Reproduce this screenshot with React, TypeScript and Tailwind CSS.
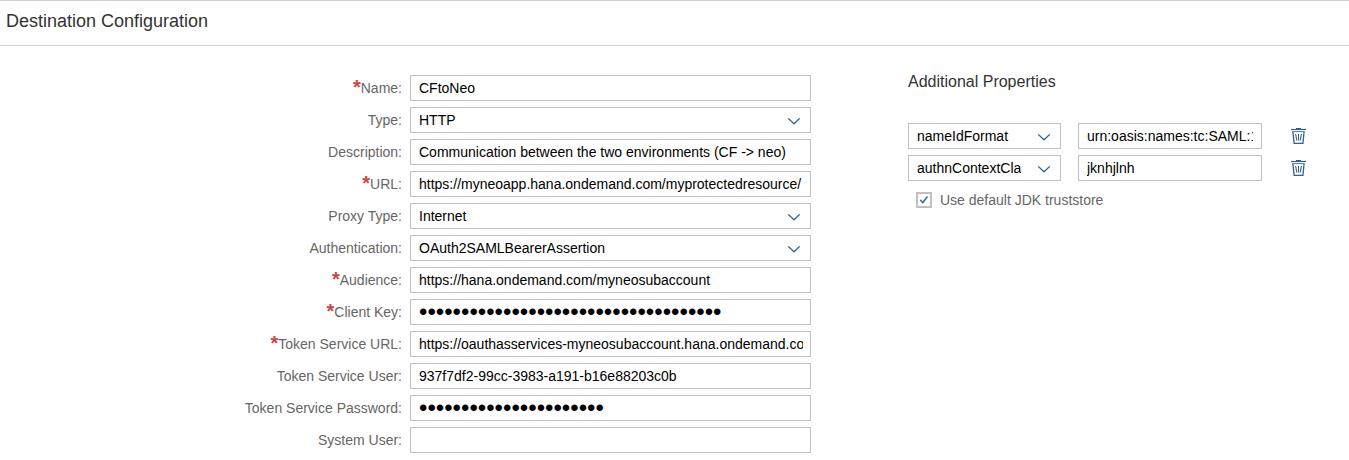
import { useId, useState } from "react";

type FieldKind = "text" | "password" | "select";

interface Field {
  label: string;
  kind: FieldKind;
  value: string;
  required?: boolean;
}

const FIELDS: Field[] = [
  { label: "Name", kind: "text", value: "CFtoNeo", required: true },
  { label: "Type", kind: "select", value: "HTTP" },
  { label: "Description", kind: "text", value: "Communication between the two environments (CF -> neo)" },
  { label: "URL", kind: "text", value: "https://myneoapp.hana.ondemand.com/myprotectedresource/", required: true },
  { label: "Proxy Type", kind: "select", value: "Internet" },
  { label: "Authentication", kind: "select", value: "OAuth2SAMLBearerAssertion" },
  { label: "Audience", kind: "text", value: "https://hana.ondemand.com/myneosubaccount", required: true },
  { label: "Client Key", kind: "password", value: "0123456789abcdef0123456789abcdef0123", required: true },
  { label: "Token Service URL", kind: "text", value: "https://oauthasservices-myneosubaccount.hana.ondemand.com/oauth2/api/v1/token", required: true },
  { label: "Token Service User", kind: "text", value: "937f7df2-99cc-3983-a191-b16e88203c0b" },
  { label: "Token Service Password", kind: "password", value: "0123456789abcdef012345" },
  { label: "System User", kind: "text", value: "" },
];

const PROPERTIES = [
  { name: "nameIdFormat", value: "urn:oasis:names:tc:SAML:1.1:nameid-format:emailAddress" },
  { name: "authnContextClassRef", value: "jknhjlnh" },
];

const boxClass =
  "block h-[26px] w-full min-w-0 rounded-none border border-[#bfbfbf] bg-white pl-2 text-black outline-none focus:border-[#427cac]";

function SelectBox({ id, value, label }: { id?: string; value: string; label?: string }) {
  return (
    <div className="relative min-w-0">
      <select id={id} aria-label={label} defaultValue={value} className={`${boxClass} appearance-none pr-[39px] text-sm`}>
        <option>{value}</option>
      </select>
      <svg
        viewBox="0 0 12 7"
        className="pointer-events-none absolute top-[11px] right-[11px] h-[7px] w-3"
        fill="none"
        stroke="#346187"
        strokeWidth="1.2"
        aria-hidden="true"
      >
        <path d="M0.3 0.4 L6 5.8 L11.7 0.4" />
      </svg>
    </div>
  );
}

function FormRow({ field }: { field: Field }) {
  const id = useId();
  return (
    <div className="grid grid-cols-[minmax(0,402fr)_minmax(0,401fr)] items-center gap-2">
      <label htmlFor={id} className="flex h-[26px] items-center justify-end text-sm whitespace-nowrap text-[#666666]">
        {field.required && <span className="h-5 text-xl leading-[18px] font-bold text-[#cc4444]">*</span>}
        {field.label}:
      </label>
      {field.kind === "select" ? (
        <SelectBox id={id} value={field.value} />
      ) : (
        <input
          id={id}
          type={field.kind}
          defaultValue={field.value}
          autoComplete="off"
          className={`${boxClass} pr-[7px] ${field.kind === "password" ? "text-2xl" : "text-sm"}`}
        />
      )}
    </div>
  );
}

function TrashIcon() {
  return (
    <svg viewBox="0 0 15 16" className="h-4 w-[15px]" fill="none" stroke="#346187" aria-hidden="true">
      <path d="M5 0.5 H10" />
      <path d="M0 1.5 H15" strokeWidth="1.2" />
      <path d="M1.5 3.5 H13.5" strokeWidth="0.8" />
      <path d="M1.9 3.5 L3.1 15.3 H11.9 L13.1 3.5" strokeWidth="1.3" />
      <path d="M4.6 6 L5.8 12.5 M7.5 6 V12.5 M10.4 6 L9.2 12.5" strokeWidth="1.1" />
    </svg>
  );
}

export default function App() {
  const [trusted, setTrusted] = useState(true);
  return (
    <div className="bg-white font-['Liberation_Sans',Arial,sans-serif]">
      <header className="flex h-[46px] items-center border-y border-[#d1d1d1] px-1.5 pb-1">
        <h1 className="text-lg text-[#333333]">Destination Configuration</h1>
      </header>
      <main className="grid grid-cols-[minmax(0,811fr)_minmax(0,441fr)] gap-[97px] pt-[29px]">
        <form className="flex flex-col gap-1.5">
          {FIELDS.map((field) => (
            <FormRow key={field.label} field={field} />
          ))}
        </form>
        <section className="pr-[43px]">
          <h2 className="mb-[34px] text-base leading-[14px] text-[#333333]">Additional Properties</h2>
          <div className="flex flex-col gap-1.5">
            {PROPERTIES.map((property) => (
              <div key={property.name} className="flex items-center gap-[29px]">
                <div className="grid min-w-0 flex-1 grid-cols-[minmax(0,153fr)_minmax(0,184fr)] gap-[17px]">
                  <SelectBox value={property.name} label="Property name" />
                  <input aria-label="Property value" defaultValue={property.value} className={`${boxClass} pr-2 text-sm`} />
                </div>
                <button type="button" aria-label="Delete property">
                  <TrashIcon />
                </button>
              </div>
            ))}
          </div>
          <label className="mt-2 ml-2 flex h-[22px] items-center gap-2 text-sm text-[#666666]">
            <span className="relative size-4 shrink-0">
              <input
                type="checkbox"
                checked={trusted}
                onChange={(event) => setTrusted(event.target.checked)}
                className="block size-4 appearance-none border-2 border-[#bfbfbf] bg-white"
              />
              {trusted && (
                <svg
                  viewBox="0 0 16 16"
                  className="pointer-events-none absolute inset-0 size-4"
                  fill="none"
                  stroke="#427cac"
                  strokeWidth="1.8"
                  aria-hidden="true"
                >
                  <path d="M4.3 7.8 L6.8 10.5 L11.5 4.5" />
                </svg>
              )}
            </span>
            Use default JDK truststore
          </label>
        </section>
      </main>
    </div>
  );
}
